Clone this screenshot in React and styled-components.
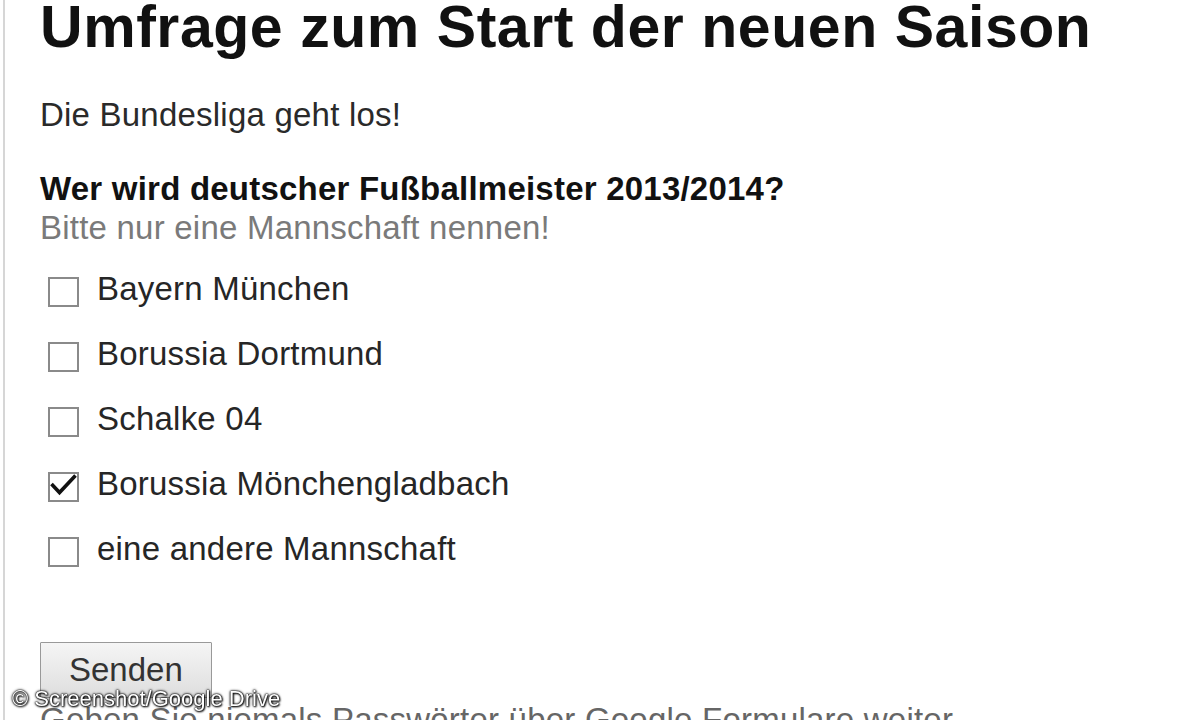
import React from "react";
import styled, { createGlobalStyle } from "styled-components";

const GlobalStyle = createGlobalStyle`
  html, body {
    margin: 0;
    padding: 0;
    background: #ffffff;
    font-family: "Liberation Sans", Arial, sans-serif;
    overflow: hidden;
  }
`;

const Page = styled.div`
  position: relative;
  margin-left: 3px;
  border-left: 2px solid #d6d6d6;
  padding: 4px 0 0 35px;
  min-height: 720px;
  box-sizing: border-box;
  letter-spacing: 0.22px;
`;

const Title = styled.h1`
  margin: 0;
  font-size: 59px;
  line-height: 46px;
  font-weight: bold;
  letter-spacing: 0.55px;
  color: #111;
  white-space: nowrap;
`;

const Intro = styled.p`
  margin: 47px 0 0;
  font-size: 33px;
  line-height: 36px;
  color: #2a2a2a;
`;

const Question = styled.div`
  margin-top: 38px;
  font-size: 33px;
  line-height: 35px;
  font-weight: bold;
  color: #111;
`;

const Hint = styled.div`
  margin-top: 4px;
  font-size: 33px;
  line-height: 35px;
  color: #7a7a7a;
`;

const OptionList = styled.div`
  margin-top: 22px;
  display: flex;
  flex-direction: column;
  gap: 25px;
`;

const Option = styled.label`
  display: flex;
  align-items: flex-start;
  padding-top: 4px;
  font-size: 33px;
  line-height: 36px;
  color: #262626;
`;

const Box = styled.span`
  display: flex;
  flex: none;
  width: 31px;
  height: 30px;
  margin: 6px 18px 0 8px;
  border: 2px solid #8a8a8a;
  box-sizing: border-box;
  background: #fff;
`;

const Button = styled.button`
  display: block;
  margin-top: 75px;
  padding: 9px 28px;
  border: 1px solid #999;
  border-radius: 1px;
  background: linear-gradient(#f5f5f5, #dedede);
  font-family: "Liberation Sans", Arial, sans-serif;
  font-size: 33px;
  line-height: 36px;
  color: #333;
`;

const Notice = styled.div`
  margin-top: 4px;
  font-size: 33px;
  line-height: 36px;
  color: #666;
  white-space: nowrap;
`;

const Watermark = styled.div`
  position: fixed;
  left: 12px;
  top: 688px;
  font-family: "Liberation Sans", Arial, sans-serif;
  font-size: 22px;
  line-height: 22px;
  color: #fff;
  text-shadow: 0 0 1px #000, 0 0 2px #000, 0 0 3px #222, 1px 1px 2px #000;
  white-space: nowrap;
`;

const CheckMark = () => (
  <svg width="27" height="26" viewBox="0 0 27 26">
    <path d="M1.5 10 L9.5 18.5 L25.5 1.5" fill="none" stroke="#111" strokeWidth="3.6" />
  </svg>
);

const teams = [
  { name: "Bayern München", checked: false },
  { name: "Borussia Dortmund", checked: false },
  { name: "Schalke 04", checked: false },
  { name: "Borussia Mönchengladbach", checked: true },
  { name: "eine andere Mannschaft", checked: false },
];

export default function App() {
  return (
    <>
      <GlobalStyle />
      <Page>
        <Title>Umfrage zum Start der neuen Saison</Title>
        <Intro>Die Bundesliga geht los!</Intro>
        <Question>Wer wird deutscher Fußballmeister 2013/2014?</Question>
        <Hint>Bitte nur eine Mannschaft nennen!</Hint>
        <OptionList>
          {teams.map((team) => (
            <Option key={team.name}>
              <Box>{team.checked && <CheckMark />}</Box>
              {team.name}
            </Option>
          ))}
        </OptionList>
        <Button>Senden</Button>
        <Notice>Geben Sie niemals Passwörter über Google Formulare weiter</Notice>
      </Page>
      <Watermark>© Screenshot/Google Drive</Watermark>
    </>
  );
}
